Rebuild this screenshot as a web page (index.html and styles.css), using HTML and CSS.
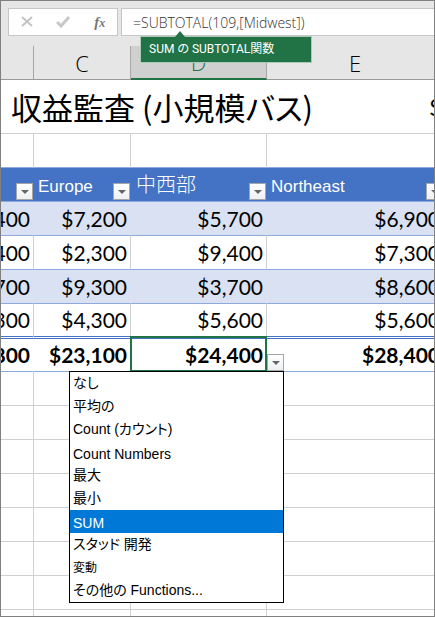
FILE: index.html
```
<!DOCTYPE html>
<html lang="ja">
  <head>
    <meta charset="UTF-8" />
    <meta name="viewport" content="width=device-width, initial-scale=1.0" />
    <title>収益監査</title>
    <link rel="stylesheet" href="styles.css">
  </head>
  <body>
    <div class="window">
      <div class="formula-bar">
        <div class="formula-tools">
          <button type="button" aria-label="キャンセル">
            <svg width="12" height="12" viewBox="0 0 12 12"><path d="M1 1 L11 10 M11 1 L1 10" fill="none" stroke="#c4c4c4" stroke-width="2" /></svg>
          </button>
          <button type="button" aria-label="入力">
            <svg width="14" height="12" viewBox="0 0 14 12"><path d="M1 6 L5 10 L13 1" fill="none" stroke="#c8c8c8" stroke-width="3" /></svg>
          </button>
          <button type="button" class="fx" aria-label="関数の挿入"><i>f</i><i class="fx-x">x</i></button>
        </div>
        <div class="formula-field">
          <input type="text" class="formula-input" aria-label="数式バー" value="=SUBTOTAL(109,[Midwest])" />
          <div class="tooltip">SUM の SUBTOTAL関数</div>
        </div>
      </div>

      <table class="sheet">
        <colgroup>
          <col class="col-b" />
          <col class="col-c" />
          <col class="col-d" />
          <col class="col-e" />
        </colgroup>
        <thead>
          <tr class="letters">
            <th></th>
            <th>C</th>
            <th class="current">D</th>
            <th>E</th>
          </tr>
        </thead>
        <tbody>
          <tr class="title-row">
            <td colspan="4">
              <div class="title-line"><span class="title">収益監査 (小規模バス)</span><span class="next">$</span></div>
            </td>
          </tr>
          <tr class="spacer"><td></td><td></td><td></td><td></td></tr>
          <tr class="fields">
            <th><div class="field"><button type="button" class="arrow" aria-label="フィルター"></button></div></th>
            <th><div class="field"><span>Europe</span><button type="button" class="arrow" aria-label="フィルター"></button></div></th>
            <th><div class="field"><span class="kanji">中西部</span><button type="button" class="arrow" aria-label="フィルター"></button></div></th>
            <th><div class="field"><span>Northeast</span><button type="button" class="arrow" aria-label="フィルター"></button></div></th>
          </tr>
          <tr class="data band"><td>400</td><td>$7,200</td><td>$5,700</td><td>$6,900</td></tr>
          <tr class="data"><td>400</td><td>$2,300</td><td>$9,400</td><td>$7,300</td></tr>
          <tr class="data band"><td>700</td><td>$9,300</td><td>$3,700</td><td>$8,600</td></tr>
          <tr class="data last"><td>300</td><td>$4,300</td><td>$5,600</td><td>$5,600</td></tr>
          <tr class="data total">
            <td>800</td>
            <td>$23,100</td>
            <td class="active">
              $24,400
              <button type="button" class="arrow open" aria-label="集計方法"></button>
              <select class="functions" size="10" aria-label="集計">
                <option>なし</option>
                <option>平均の</option>
                <option>Count (カウント)</option>
                <option class="latin">Count Numbers</option>
                <option>最大</option>
                <option>最小</option>
                <option class="latin" selected>SUM</option>
                <option>スタッド 開発</option>
                <option class="small">変動</option>
                <option>その他の Functions...</option>
              </select>
            </td>
            <td>$28,400</td>
          </tr>
          <tr><td></td><td></td><td></td><td></td></tr>
          <tr><td></td><td></td><td></td><td></td></tr>
          <tr><td></td><td></td><td></td><td></td></tr>
          <tr><td></td><td></td><td></td><td></td></tr>
          <tr><td></td><td></td><td></td><td></td></tr>
          <tr><td></td><td></td><td></td><td></td></tr>
          <tr><td></td><td></td><td></td><td></td></tr>
          <tr><td></td><td></td><td></td><td></td></tr>
        </tbody>
      </table>
    </div>
  </body>
</html>
```
FILE: styles.css
```
* {
  box-sizing: border-box;
}

body {
  margin: 0;
  font-family: "Liberation Sans", "Noto Sans CJK JP", sans-serif;
  color: #000;
  background: #fff;
}

button {
  padding: 0;
  border: none;
  background: none;
  font: inherit;
}

.window {
  height: 100vh;
  border: 1px solid #808080;
  overflow: hidden;
}

/* formula bar */
.formula-bar {
  display: flex;
  gap: 3px;
  padding: 7px 0 10px 7px;
  background: #e6e6e6;
}

.formula-tools {
  display: flex;
  align-items: center;
  justify-content: space-around;
  width: 110px;
  height: 28px;
  border: 1px solid #c6c6c6;
  background: #fff;
}

.formula-tools svg {
  display: block;
}

.fx {
  font-family: "Liberation Serif", serif;
  font-size: 15px;
  font-weight: bold;
  line-height: 20px;
  color: #777;
}

.fx-x {
  font-size: 12px;
}

.formula-field {
  position: relative;
  flex: 1;
}

.formula-input {
  display: block;
  width: 100%;
  height: 28px;
  padding: 0 11px;
  border: 1px solid #c6c6c6;
  border-right: none;
  background: #fff;
  font-family: "Open Sans", sans-serif;
  font-size: 14px;
  font-weight: 300;
  color: #333;
}

.tooltip {
  position: absolute;
  z-index: 2;
  top: 28px;
  left: 19px;
  width: 172px;
  height: 27px;
  padding-left: 8px;
  border: 1px solid #a9cbb8;
  background: #217346;
  color: #fff;
  font-family: Roboto, "Noto Sans CJK JP", sans-serif;
  font-feature-settings: "palt";
  font-size: 12px;
  line-height: 24px;
  white-space: nowrap;
}

.tooltip::before {
  content: "";
  position: absolute;
  top: -6px;
  left: 34px;
  border: 5px solid transparent;
  border-top: none;
  border-bottom: 6px solid #217346;
}

/* the grid starts and ends outside the window */
.sheet {
  width: calc(100% + 50px);
  margin-left: -40px;
  border-collapse: separate;
  border-spacing: 0;
  table-layout: fixed;
}

.col-b {
  width: 73px;
}

.col-c {
  width: 97px;
}

.col-d {
  width: 136px;
}

.sheet td,
.sheet th {
  height: 34px;
  padding: 0;
  border-right: 1px solid #d0d0d0;
  border-bottom: 1px solid #d0d0d0;
}

.sheet .letters th {
  border-right-color: #a6a6a6;
  border-bottom-color: #999;
  background: #e6e6e6;
  font-family: "Open Sans", sans-serif;
  font-size: 22px;
  font-weight: 300;
  line-height: 32px;
}

.sheet .letters .current {
  border-bottom: 2px solid #217346;
  background: #d0d0d0;
  color: #217346;
}

.sheet .title-row td {
  height: 54px;
}

.title-line {
  display: flex;
  justify-content: space-between;
  padding-left: 50px;
  font-size: 31px;
  line-height: 52px;
  white-space: nowrap;
}

.title {
  font-family: "Noto Sans CJK JP", sans-serif;
  font-feature-settings: "palt";
}

.next {
  font-family: Lato, sans-serif;
  font-size: 24px;
}

.sheet .spacer td {
  border-bottom-color: #8ea9db;
}

.sheet .fields th {
  border-right: none;
  border-bottom-color: #8ea9db;
  background: #4472c4;
  color: #fff;
  font-size: 17px;
  font-weight: normal;
}

.field {
  display: flex;
  align-items: flex-end;
  height: 33px;
  padding: 0 1px 1px 4px;
}

.field span {
  line-height: 26px;
}

.field .kanji {
  padding-left: 1px;
  font-size: 20px;
  font-weight: 300;
  line-height: 30px;
}

.arrow {
  display: flex;
  align-items: center;
  justify-content: center;
  width: 17px;
  height: 17px;
  margin-left: auto;
  border: 1px solid #a6a6a6;
  background: linear-gradient(#fff, #eef0f2);
}

.arrow::before {
  content: "";
  border: 4px solid transparent;
  border-top-color: #666;
  border-bottom: none;
}

.sheet .data td {
  padding-right: 3px;
  border-bottom-color: #8ea9db;
  font-family: Lato, sans-serif;
  font-size: 21px;
  line-height: 32px;
  text-align: right;
}

.sheet .band td {
  border-right-color: #d9e1f2;
  background: #d9e1f2;
}

.sheet .last td {
  height: 35px;
  border-bottom: 3px double #4472c4;
}

.sheet .total td {
  height: 33px;
  border-right-color: transparent;
  font-weight: bold;
}

.sheet .total .active {
  position: relative;
}

.active::after {
  content: "";
  position: absolute;
  inset: -3px -1px -1px -1px;
  border: 2px solid #217346;
}

.open {
  position: absolute;
  z-index: 1;
  right: -18px;
  bottom: 0;
}

.functions {
  position: absolute;
  z-index: 2;
  top: 100%;
  left: -62px;
  width: 215px;
  height: 232px;
  padding: 0;
  border: 1px solid #000;
  border-radius: 0;
  outline: none;
  background: #fff;
  color: #000;
  font-family: "Liberation Sans", "Noto Sans CJK JP", sans-serif;
  font-feature-settings: "palt";
  font-size: 14px;
  font-weight: normal;
  overflow: hidden;
}

.functions option {
  height: 23px;
  min-height: 23px;
  padding: 0 3px;
  font-feature-settings: "palt";
}

.functions .latin {
  padding-top: 5px;
}

.functions .small {
  padding-top: 2px;
  font-size: 12px;
}

.functions option:checked {
  background: #0078d7 linear-gradient(#0078d7, #0078d7);
  color: #fff;
}
```
